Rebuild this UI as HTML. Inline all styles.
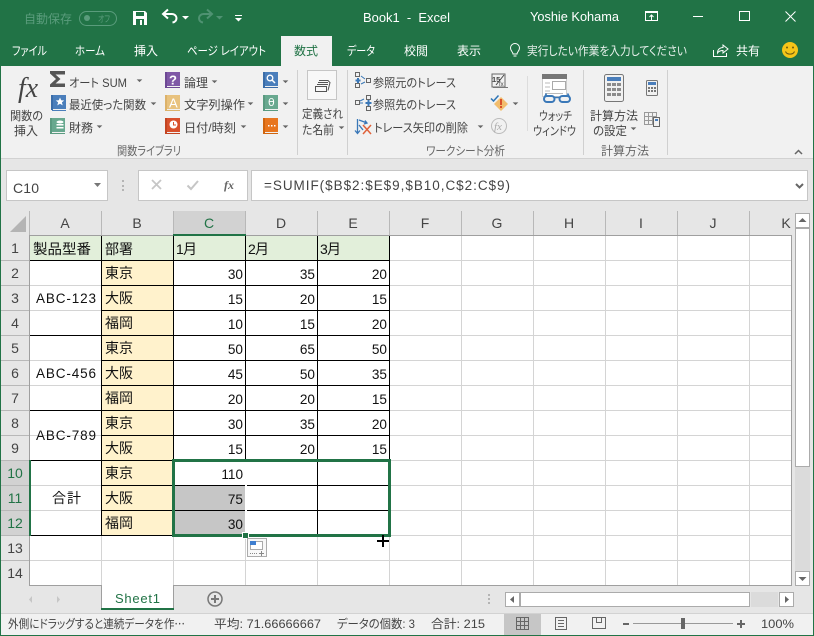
<!DOCTYPE html>
<html lang="ja"><head><meta charset="utf-8"><title>Book1 - Excel</title>
<style>
html,body{margin:0;padding:0;width:814px;height:636px;overflow:hidden;background:#e6e6e6}
svg{display:block}
text{font-family:"Liberation Sans","Noto Sans CJK JP",sans-serif;font-size:12px;fill:#444;white-space:pre}
.j{font-feature-settings:"palt"}
.w{fill:#fff}
.c{font-size:14px;fill:#111}
.n{font-size:13.6px;fill:#111;text-anchor:end}
.h{font-size:14px;fill:#444;text-anchor:middle}
.hs{font-size:14px;fill:#217346;text-anchor:middle}
.car{fill:#666;transform-box:fill-box;transform-origin:center;transform:scale(.8)}
</style></head><body>
<svg width="814" height="636" viewBox="0 0 814 636" xmlns="http://www.w3.org/2000/svg">
<!-- frame -->
<rect width="814" height="636" fill="#e6e6e6"/>
<rect width="814" height="66" fill="#217346"/>
<rect x="0" y="0" width="1" height="636" fill="#217346"/>
<rect x="813" y="0" width="1" height="636" fill="#217346"/>
<rect x="0" y="635" width="814" height="1" fill="#217346"/>
<!-- title bar -->
<text x="24" y="23" class="j" style="fill:#5a9c7c" textLength="48" lengthAdjust="spacingAndGlyphs">自動保存</text>
<rect x="79.500" y="11.500" width="37" height="14" rx="7" fill="none" stroke="#5a9c7c"/>
<circle cx="87" cy="18" r="3" fill="#5a9c7c"/>
<text x="98" y="22" class="j" style="font-size:9px;fill:#5a9c7c" textLength="12" lengthAdjust="spacingAndGlyphs">オフ</text>
<path d="M133 11h12l2 2v12h-14z" fill="#fff"/>
<rect x="136" y="12" width="8" height="4" fill="#217346"/>
<rect x="136" y="19" width="8" height="6" fill="#217346"/><rect x="140" y="20" width="2" height="5" fill="#fff"/>
<path d="M172.500 22.500c3-.5 4-2.500 4-4.500s-2-4-4.500-4H164" fill="none" stroke="#fff" stroke-width="2"/><path d="M168 9.500L163 14l5 4.500" fill="none" stroke="#fff" stroke-width="2"/>
<path d="M182 16h7l-3.500 3.500z" fill="#fff"/>
<path d="M203 22.500c-3-.5-4-2.500-4-4.500s2-4 4.500-4H211" fill="none" stroke="#4f9272" stroke-width="2"/><path d="M207 9.500l5 4.500-5 4.500" fill="none" stroke="#4f9272" stroke-width="2"/>
<path d="M216 16h7l-3.500 3.500z" fill="#4f9272"/>
<rect x="235" y="15" width="7" height="1" fill="#fff"/><path d="M235 18h7l-3.500 3.500z" fill="#fff"/>
<text x="363" y="22" class="w" style="font-size:12.500px" textLength="87" lengthAdjust="spacingAndGlyphs">Book1  -  Excel</text>
<text x="530" y="21" class="w" style="font-size:12.500px" textLength="89" lengthAdjust="spacingAndGlyphs">Yoshie Kohama</text>
<rect x="645.500" y="11.500" width="12" height="9" fill="none" stroke="#fff"/><rect x="645" y="11" width="13" height="2" fill="#fff"/><path d="M651.500 20v-5M649.500 17l2-2 2 2" fill="none" stroke="#fff"/>
<rect x="693" y="16" width="10" height="1" fill="#fff"/>
<rect x="739.500" y="11.500" width="10" height="9" fill="none" stroke="#fff"/>
<path d="M785.500 11.500l10 10M795.500 11.500l-10 10" fill="none" stroke="#fff"/>
<!-- tabs -->
<rect x="281" y="36" width="51" height="30" fill="#f1f1f1"/>
<text x="12" y="55" class="j w" textLength="35" lengthAdjust="spacingAndGlyphs">ファイル</text>
<text x="75" y="55" class="j w" textLength="30" lengthAdjust="spacingAndGlyphs">ホーム</text>
<text x="134" y="55" class="j w" textLength="24" lengthAdjust="spacingAndGlyphs">挿入</text>
<text x="187" y="55" class="j w" textLength="79" lengthAdjust="spacingAndGlyphs">ページ レイアウト</text>
<text x="294" y="55" class="j" style="fill:#217346" textLength="24" lengthAdjust="spacingAndGlyphs">数式</text>
<text x="347" y="55" class="j w" textLength="28" lengthAdjust="spacingAndGlyphs">データ</text>
<text x="404" y="55" class="j w" textLength="24" lengthAdjust="spacingAndGlyphs">校閲</text>
<text x="457" y="55" class="j w" textLength="24" lengthAdjust="spacingAndGlyphs">表示</text>
<path d="M513 54c0-2-2.500-3-2.500-6a4.500 4.500 0 0 1 9 0c0 3-2.500 4-2.500 6zM513.500 56h3" fill="none" stroke="#fff"/>
<text x="527" y="55" class="j" style="fill:#e8f0ec" textLength="160" lengthAdjust="spacingAndGlyphs">実行したい作業を入力してください</text>
<path d="M713.500 50v6.500h13V53" fill="none" stroke="#fff"/><path d="M717.500 53c0-4 3-5.500 5.500-5.500V45l5 4-5 4v-2.500c-2.500 0-4.500 1-5.500 2.500z" fill="none" stroke="#fff"/>
<text x="736" y="55" class="j w" textLength="24" lengthAdjust="spacingAndGlyphs">共有</text>
<circle cx="790" cy="50" r="8" fill="#f5c518"/><circle cx="787" cy="47.500" r="1" fill="#6b5a10"/><circle cx="793" cy="47.500" r="1" fill="#6b5a10"/><path d="M785.500 51.500c1.500 3.500 7.500 3.500 9 0" fill="none" stroke="#6b5a10"/>
<!-- ribbon -->
<rect x="1" y="66" width="812" height="92" fill="#f1f1f1"/>
<rect x="1" y="158" width="812" height="1" fill="#d2d2d2"/>
<rect x="297" y="70" width="1" height="85" fill="#d0d0d0"/>
<rect x="347" y="70" width="1" height="85" fill="#d0d0d0"/>
<rect x="527" y="76" width="1" height="55" fill="#dcdcdc"/>
<rect x="583" y="70" width="1" height="85" fill="#d0d0d0"/>
<rect x="667" y="70" width="1" height="85" fill="#d0d0d0"/>
<text x="18" y="97" style="font-family:'Liberation Serif',serif;font-style:italic;font-size:29px;fill:#444" textLength="20" lengthAdjust="spacingAndGlyphs">fx</text>
<text x="10" y="120" class="j" textLength="33" lengthAdjust="spacingAndGlyphs">関数の</text>
<text x="14" y="135" class="j" textLength="24" lengthAdjust="spacingAndGlyphs">挿入</text>
<path d="M50 71h15v3.500h-9.500l5 4.500-5 4.500H65V87H50v-2.500l6-5.500-6-5.500z" fill="#555"/>
<text x="69" y="87" class="j" textLength="58" lengthAdjust="spacingAndGlyphs">オート SUM</text>
<path class="car" d="M136 79h7l-3.500 3.500z"/>
<!-- book icons -->
<g><path d="M52 95h14v14H53v1h13v1H52z" fill="#4a7ebb"/><rect x="51" y="95" width="2" height="15" fill="#3a6ca8"/><path d="M60 97.500l1.200 2.800 3 .2-2.300 1.900.8 3-2.700-1.600-2.700 1.600.8-3-2.300-1.900 3-.2z" fill="#fff"/></g>
<text x="69" y="109" class="j" textLength="77" lengthAdjust="spacingAndGlyphs">最近使った関数</text>
<path class="car" d="M150 102h7l-3.500 3.500z"/>
<g><rect x="50" y="118" width="15" height="14" fill="#68a88f"/><rect x="50" y="118" width="2" height="16" fill="#5a9a80"/><rect x="51" y="133" width="14" height="1" fill="#5a9a80"/><ellipse cx="60" cy="122" rx="3.500" ry="1.500" fill="#fff"/><rect x="56.500" y="124" width="7" height="1.500" fill="#fff"/><rect x="56.500" y="127" width="7" height="1.500" fill="#fff"/></g>
<text x="69" y="132" class="j" textLength="24" lengthAdjust="spacingAndGlyphs">財務</text>
<path class="car" d="M96 125h7l-3.500 3.500z"/>
<g><rect x="165" y="72" width="15" height="14" fill="#7f58a6"/><rect x="165" y="72" width="2" height="16" fill="#6d4894"/><rect x="166" y="87" width="14" height="1" fill="#6d4894"/><text x="169" y="84.500" style="font-size:13px;font-weight:bold;fill:#fff">?</text></g>
<text x="184" y="87" class="j" textLength="24" lengthAdjust="spacingAndGlyphs">論理</text>
<path class="car" d="M211 80h7l-3.500 3.500z"/>
<g><rect x="165" y="95" width="15" height="14" fill="#e8c27e"/><rect x="165" y="95" width="2" height="16" fill="#dcb26a"/><rect x="166" y="110" width="14" height="1" fill="#dcb26a"/><text x="169" y="107.500" style="font-size:13px;fill:#fff">A</text></g>
<text x="184" y="109" class="j" textLength="61" lengthAdjust="spacingAndGlyphs">文字列操作</text>
<path class="car" d="M247 102h7l-3.500 3.500z"/>
<g><rect x="165" y="118" width="15" height="14" fill="#d8502c"/><rect x="165" y="118" width="2" height="16" fill="#c24422"/><rect x="166" y="133" width="14" height="1" fill="#c24422"/><circle cx="173.500" cy="124.500" r="4" fill="#fff"/><path d="M173.500 122v3h2.500" fill="none" stroke="#d8502c"/></g>
<text x="184" y="132" class="j" textLength="52" lengthAdjust="spacingAndGlyphs">日付/時刻</text>
<path class="car" d="M240 125h7l-3.500 3.500z"/>
<g><rect x="263" y="72" width="15" height="14" fill="#4a7ebb"/><rect x="263" y="72" width="2" height="16" fill="#3a6ca8"/><rect x="264" y="87" width="14" height="1" fill="#3a6ca8"/><circle cx="270" cy="78" r="2.800" fill="none" stroke="#fff" stroke-width="1.300"/><path d="M272 80l3 3" stroke="#fff" stroke-width="1.500"/></g>
<path class="car" d="M282 80h7l-3.500 3.500z"/>
<g><rect x="263" y="95" width="15" height="14" fill="#68a88f"/><rect x="263" y="95" width="2" height="16" fill="#5a9a80"/><rect x="264" y="110" width="14" height="1" fill="#5a9a80"/><text x="268" y="106" style="font-size:11px;fill:#fff;font-family:'DejaVu Sans',sans-serif">θ</text></g>
<path class="car" d="M282 102h7l-3.500 3.500z"/>
<g><rect x="263" y="118" width="15" height="14" fill="#e8761f"/><rect x="263" y="118" width="2" height="16" fill="#d0650f"/><rect x="264" y="133" width="14" height="1" fill="#d0650f"/><rect x="268" y="125" width="1.500" height="1.500" fill="#fff"/><rect x="271" y="125" width="1.500" height="1.500" fill="#fff"/><rect x="274" y="125" width="1.500" height="1.500" fill="#fff"/></g>
<path class="car" d="M282 125h7l-3.500 3.500z"/>
<!-- name manager -->
<rect x="307.500" y="70.500" width="29" height="29" fill="#f8f8f8" stroke="#c6c6c6"/>
<path d="M315.500 91.500h11v-5h-11zM317 84.500h11M318 82.500h10M319 80.500h9l2 2-2 8" fill="none" stroke="#555"/>
<text x="302" y="118" class="j" textLength="41" lengthAdjust="spacingAndGlyphs">定義され</text>
<text x="302" y="134" class="j" textLength="32" lengthAdjust="spacingAndGlyphs">た名前</text>
<path class="car" d="M338 126h7l-3.500 3.500z"/>
<!-- trace -->
<g fill="none" stroke="#666"><rect x="355.500" y="72.500" width="4" height="4"/><rect x="355.500" y="83.500" width="4" height="4"/><rect x="366.500" y="78.500" width="4" height="4"/></g>
<path d="M358 78v5M355.500 80.500h5" stroke="#3a78b8" stroke-width="2"/><path d="M361 76l4 3M361 84l4-2" stroke="#3a78b8"/>
<text x="373" y="87" class="j" textLength="83" lengthAdjust="spacingAndGlyphs">参照元のトレース</text>
<g fill="none" stroke="#666"><rect x="355.500" y="100.500" width="4" height="4"/><rect x="366.500" y="95.500" width="4" height="4"/><rect x="366.500" y="106.500" width="4" height="4"/></g>
<path d="M368.500 100v6M365.500 103h6" stroke="#3a78b8" stroke-width="2"/><path d="M360 101l4-2M360 103l3 0" stroke="#3a78b8"/>
<text x="373" y="109" class="j" textLength="83" lengthAdjust="spacingAndGlyphs">参照先のトレース</text>
<path d="M357.500 119v14M355 130.500l2.500 3 2.500-3M359 120l8 3M359 125l4 5M365 120.500l2 2.500-3 1" fill="none" stroke="#3a78b8" stroke-width="1.300"/>
<path d="M363 125l8 9M371 125l-8 9" stroke="#e0623a" stroke-width="1.500"/>
<text x="374" y="132" class="j" textLength="94" lengthAdjust="spacingAndGlyphs">トレース矢印の削除</text>
<path class="car" d="M477 125h7l-3.500 3.500z"/>
<!-- audit small -->
<rect x="492" y="74" width="13" height="13" fill="none" stroke="#666"/>
<text x="492" y="82" style="font-size:7.500px;font-weight:bold;fill:#444">15</text>
<path d="M504 75l-8 10" stroke="#444"/><text x="499" y="86" style="font-size:6px;fill:#444">fx</text><rect x="493" y="87" width="15" height="1" fill="#777"/>
<path d="M491 98.500l2.500 2.500 5-5.500" fill="none" stroke="#2e75b6" stroke-width="1.500"/>
<path d="M501 97l7 7-7 7-7-7z" fill="#f2bd6d"/><rect x="500" y="99" width="2" height="6" fill="#d9502a"/><rect x="500" y="106" width="2" height="2" fill="#d9502a"/>
<path class="car" d="M512 102h7l-3.500 3.500z"/>
<circle cx="499" cy="126" r="7.500" fill="none" stroke="#bbb"/>
<text x="494" y="130" style="font-family:'Liberation Serif',serif;font-style:italic;font-size:11px;fill:#aaa">fx</text>
<!-- watch -->
<rect x="542.500" y="74.500" width="24" height="22" fill="#fff" stroke="#ccc"/><rect x="542" y="74" width="25" height="5" fill="#777"/>
<rect x="552.500" y="81.500" width="13" height="8" fill="none" stroke="#aaa"/><path d="M545 83h5M545 87h5M545 91h5M545 93.500h18" stroke="#bbb"/>
<rect x="544" y="96" width="10.500" height="6" rx="3" fill="#f1f1f1" stroke="#3a78b8" stroke-width="2"/><rect x="559.500" y="96" width="10.500" height="6" rx="3" fill="#f1f1f1" stroke="#3a78b8" stroke-width="2"/><path d="M554.500 97.500h5M544 98l2.500-4.500M570 98l-2.500-4.500" fill="none" stroke="#3a78b8" stroke-width="1.600"/>
<text x="539" y="120" class="j" textLength="33" lengthAdjust="spacingAndGlyphs">ウォッチ</text>
<text x="533" y="135" class="j" textLength="43" lengthAdjust="spacingAndGlyphs">ウィンドウ</text>
<!-- calc -->
<rect x="604.500" y="74.500" width="19" height="27" rx="2" fill="#f1f1f1" stroke="#777"/>
<rect x="607" y="77" width="14" height="4" fill="#4a7ebb"/>
<g fill="#8c8c8c"><rect x="607" y="83" width="4" height="3"/><rect x="612" y="83" width="4" height="3"/><rect x="617" y="83" width="4" height="3"/><rect x="607" y="88" width="4" height="3"/><rect x="612" y="88" width="4" height="3"/><rect x="617" y="88" width="4" height="3"/><rect x="607" y="93" width="4" height="3"/><rect x="612" y="93" width="4" height="3"/><rect x="617" y="93" width="4" height="3"/></g>
<text x="590" y="120" class="j" textLength="48" lengthAdjust="spacingAndGlyphs">計算方法</text>
<text x="593" y="135" class="j" textLength="34" lengthAdjust="spacingAndGlyphs">の設定</text>
<path class="car" d="M630 127h7l-3.500 3.500z"/>
<rect x="646.500" y="80.500" width="11" height="15" rx="1" fill="#f1f1f1" stroke="#777"/><rect x="648" y="82" width="8" height="3" fill="#4a7ebb"/><g fill="#777"><rect x="648" y="87" width="2" height="2"/><rect x="651" y="87" width="2" height="2"/><rect x="654" y="87" width="2" height="2"/><rect x="648" y="90" width="2" height="2"/><rect x="651" y="90" width="2" height="2"/><rect x="654" y="90" width="2" height="2"/></g>
<path d="M644.500 112.500h12v12h-12zM644.500 116.500h12M644.500 120.500h8M648.500 112.500v12M652.500 112.500v12" fill="none" stroke="#999"/>
<rect x="653.500" y="117.500" width="6" height="9" fill="#f1f1f1" stroke="#666"/><rect x="655" y="119" width="3" height="2" fill="#4a7ebb"/>
<text x="117" y="155" class="j" style="fill:#666" textLength="64" lengthAdjust="spacingAndGlyphs">関数ライブラリ</text>
<text x="426" y="155" class="j" style="fill:#666" textLength="79" lengthAdjust="spacingAndGlyphs">ワークシート分析</text>
<text x="601" y="155" class="j" style="fill:#666" textLength="48" lengthAdjust="spacingAndGlyphs">計算方法</text>
<path d="M795 154l3.500-3.500 3.500 3.500" fill="none" stroke="#666" stroke-width="1.500"/>
<!-- formula bar -->
<rect x="6.500" y="170.500" width="101" height="30" fill="#fff" stroke="#c6c6c6"/>
<text x="13" y="193" style="font-size:14px" textLength="26" lengthAdjust="spacing">C10</text>
<path d="M94 183h7l-3.500 4z" fill="#777"/>
<g fill="#b4b4b4"><rect x="122" y="180" width="2" height="2"/><rect x="122" y="185" width="2" height="2"/><rect x="122" y="189" width="2" height="2"/></g>
<rect x="138.500" y="170.500" width="109" height="30" fill="#fff" stroke="#c6c6c6"/>
<path d="M152 180l9 9M161 180l-9 9" stroke="#c6c6c6" stroke-width="1.800"/>
<path d="M187.500 185.500l3.500 3.500 7-8" fill="none" stroke="#c6c6c6" stroke-width="2"/>
<text x="224" y="189" style="font-family:'Liberation Serif',serif;font-style:italic;font-weight:bold;font-size:12px;fill:#666">fx</text>
<rect x="251.500" y="170.500" width="556" height="30" fill="#fff" stroke="#c6c6c6"/>
<text x="264" y="190" style="font-size:13.500px" textLength="246" lengthAdjust="spacing">=SUMIF($B$2:$E$9,$B10,C$2:C$9)</text>
<path d="M796 184l3.500 3.500 3.500-3.500" fill="none" stroke="#666" stroke-width="2"/>
<!-- grid base -->
<rect x="30" y="236" width="761" height="349" fill="#fff"/>
<g stroke="#d4d4d4" fill="none" shape-rendering="crispEdges">
<path d="M30 260.500H791M30 285.500H791M30 310.500H791M30 335.500H791M30 360.500H791M30 385.500H791M30 410.500H791M30 435.500H791M30 460.500H791M30 485.500H791M30 510.500H791M30 535.500H791M30 560.500H791"/>
<path d="M101.500 236V585M173.500 236V585M245.500 236V585M317.500 236V585M389.500 236V585M461.500 236V585M533.500 236V585M605.500 236V585M677.500 236V585M749.500 236V585"/>
</g>
<rect x="30" y="236" width="359" height="24" fill="#e2efda"/>
<rect x="102" y="261" width="71" height="274" fill="#fff2cc"/>
<!-- headers -->
<rect x="174" y="211" width="71" height="23" fill="#d2d2d2"/>
<rect x="1" y="461" width="28" height="74" fill="#d2d2d2"/>
<path d="M26 216v16H10z" fill="#b4b4b4"/>
<g stroke="#b8b8b8" shape-rendering="crispEdges"><path d="M29.500 211V235M101.500 211V235M173.500 211V235M245.500 211V235M317.500 211V235M389.500 211V235M461.500 211V235M533.500 211V235M605.500 211V235M677.500 211V235M749.500 211V235"/>
<path d="M1 260.500H29M1 285.500H29M1 310.500H29M1 335.500H29M1 360.500H29M1 385.500H29M1 410.500H29M1 435.500H29M1 460.500H29M1 485.500H29M1 510.500H29M1 535.500H29M1 560.500H29"/></g>
<rect x="29" y="235" width="762" height="1" fill="#9f9f9f"/>
<rect x="29" y="235" width="1" height="350" fill="#9f9f9f"/>
<rect x="791" y="235" width="1" height="351" fill="#9f9f9f"/>
<rect x="29" y="585" width="763" height="1" fill="#9f9f9f"/>
<rect x="173" y="234" width="73" height="2" fill="#217346"/>
<g>
<text x="65" y="228" class="h">A</text><text x="137" y="228" class="h">B</text><text x="209" y="228" class="hs">C</text><text x="281" y="228" class="h">D</text><text x="353" y="228" class="h">E</text><text x="425" y="228" class="h">F</text><text x="497" y="228" class="h">G</text><text x="569" y="228" class="h">H</text><text x="641" y="228" class="h">I</text><text x="713" y="228" class="h">J</text><text x="786" y="228" class="h">K</text>
</g>
<g>
<text x="15" y="253" class="h">1</text><text x="15" y="278" class="h">2</text><text x="15" y="303" class="h">3</text><text x="15" y="328" class="h">4</text><text x="15" y="353" class="h">5</text><text x="15" y="378" class="h">6</text><text x="15" y="403" class="h">7</text><text x="15" y="428" class="h">8</text><text x="15" y="453" class="h">9</text><text x="15" y="478" class="hs">10</text><text x="15" y="503" class="hs">11</text><text x="15" y="528" class="hs">12</text><text x="15" y="553" class="h">13</text><text x="15" y="578" class="h">14</text>
</g>
<!-- selection fill -->
<rect x="175" y="486" width="70" height="49" fill="#c6c6c6"/>
<!-- black borders -->
<g stroke="#000" fill="none" shape-rendering="crispEdges">
<path d="M30 260.500H389M101 285.500H389M101 310.500H389M30 335.500H389M101 360.500H389M101 385.500H389M30 410.500H389M101 435.500H389M30 460.500H389M101 485.500H389M101 510.500H389M30 535.500H389"/>
<path d="M101.500 236V536M173.500 236V536M245.500 236V536M317.500 236V536M389.500 236V536"/>
</g>
<rect x="29" y="460" width="2" height="76" fill="#217346"/>
<!-- cell text -->
<g>
<text x="33" y="254" class="c" textLength="58" lengthAdjust="spacingAndGlyphs">製品型番</text>
<text x="105" y="254" class="c" textLength="28">部署</text>
<text x="176" y="254" class="c" textLength="21">1月</text>
<text x="248" y="254" class="c" textLength="21">2月</text>
<text x="320" y="254" class="c" textLength="21">3月</text>
<text x="36" y="303" class="c" style="font-size:13.500px" textLength="60" lengthAdjust="spacing">ABC-123</text>
<text x="36" y="378" class="c" style="font-size:13.500px" textLength="60" lengthAdjust="spacing">ABC-456</text>
<text x="36" y="440" class="c" style="font-size:13.500px" textLength="60" lengthAdjust="spacing">ABC-789</text>
<text x="52" y="503" class="c" textLength="29">合計</text>
<text x="105" y="278" class="c" textLength="28">東京</text><text x="105" y="303" class="c" textLength="28">大阪</text><text x="105" y="328" class="c" textLength="28">福岡</text>
<text x="105" y="353" class="c" textLength="28">東京</text><text x="105" y="378" class="c" textLength="28">大阪</text><text x="105" y="403" class="c" textLength="28">福岡</text>
<text x="105" y="428" class="c" textLength="28">東京</text><text x="105" y="453" class="c" textLength="28">大阪</text>
<text x="105" y="478" class="c" textLength="28">東京</text><text x="105" y="503" class="c" textLength="28">大阪</text><text x="105" y="528" class="c" textLength="28">福岡</text>
<text x="243" y="279" class="n">30</text><text x="315" y="279" class="n">35</text><text x="387" y="279" class="n">20</text>
<text x="243" y="304" class="n">15</text><text x="315" y="304" class="n">20</text><text x="387" y="304" class="n">15</text>
<text x="243" y="329" class="n">10</text><text x="315" y="329" class="n">15</text><text x="387" y="329" class="n">20</text>
<text x="243" y="354" class="n">50</text><text x="315" y="354" class="n">65</text><text x="387" y="354" class="n">50</text>
<text x="243" y="379" class="n">45</text><text x="315" y="379" class="n">50</text><text x="387" y="379" class="n">35</text>
<text x="243" y="404" class="n">20</text><text x="315" y="404" class="n">20</text><text x="387" y="404" class="n">15</text>
<text x="243" y="429" class="n">30</text><text x="315" y="429" class="n">35</text><text x="387" y="429" class="n">20</text>
<text x="243" y="454" class="n">15</text><text x="315" y="454" class="n">20</text><text x="387" y="454" class="n">15</text>
<text x="243" y="479" class="n">110</text><text x="243" y="504" class="n">75</text><text x="243" y="529" class="n">30</text>
</g>
<!-- selection outline -->
<rect x="245" y="462" width="2" height="72" fill="#fff"/>
<rect x="173.500" y="460.500" width="216" height="75" fill="none" stroke="#217346" stroke-width="3"/>
<rect x="242" y="532" width="7" height="7" fill="#fff"/><rect x="243" y="533" width="5" height="5" fill="#217346"/>
<!-- paste options -->
<rect x="247.500" y="538.500" width="19" height="18" fill="#f8f8f8" stroke="#ababab"/>
<rect x="250.500" y="541.500" width="12" height="8" fill="#fff" stroke="#aaa"/><rect x="250" y="541" width="6" height="4" fill="#3f7fd0"/>
<path d="M250 553.500h7" stroke="#888" stroke-dasharray="1 1" fill="none"/>
<path d="M261.500 551v5M259 553.500h5" stroke="#888" fill="none"/>
<!-- cursor -->
<path d="M383 535v12M377 541h12" stroke="#000" stroke-width="2"/>
<!-- sheet tabs -->
<rect x="1" y="586" width="812" height="27" fill="#e6e6e6"/>
<rect x="101" y="585" width="73" height="24" fill="#fff"/>
<rect x="101" y="585" width="1" height="24" fill="#9f9f9f"/><rect x="173" y="585" width="1" height="24" fill="#9f9f9f"/>
<rect x="101" y="608" width="73" height="2" fill="#217346"/>
<text x="115" y="603" style="font-size:13px;fill:#217346" textLength="45" lengthAdjust="spacing">Sheet1</text>
<path d="M32 596v7l-3-3.500zM57 596v7l3-3.500z" fill="#c6c6c6"/>
<circle cx="215" cy="599" r="7" fill="none" stroke="#777" stroke-width="1.500"/><path d="M215 595v8M211 599h8" stroke="#777" stroke-width="2"/>
<g fill="#b4b4b4"><rect x="488" y="594" width="2" height="2"/><rect x="488" y="598" width="2" height="2"/><rect x="488" y="602" width="2" height="2"/></g>
<rect x="505.500" y="592.500" width="14" height="14" fill="#fff" stroke="#ababab"/><path d="M514 596v7l-4-3.500z" fill="#666"/>
<rect x="520.500" y="592.500" width="229" height="14" fill="#fff" stroke="#ababab"/>
<rect x="751" y="592" width="27" height="15" fill="#dbdbdb"/>
<rect x="779.500" y="592.500" width="14" height="14" fill="#fff" stroke="#ababab"/><path d="M785 596v7l4-3.500z" fill="#666"/>
<!-- vertical scrollbar -->
<rect x="795" y="213" width="15" height="373" fill="#dbdbdb"/>
<rect x="795.500" y="213.500" width="14" height="14" fill="#fff" stroke="#ababab"/><path d="M798.500 222h8l-4-4z" fill="#666"/>
<rect x="795.500" y="228.500" width="14" height="238" fill="#fff" stroke="#ababab"/>
<rect x="795.500" y="571.500" width="14" height="14" fill="#fff" stroke="#ababab"/><path d="M798.500 577h8l-4 4z" fill="#666"/>
<!-- status bar -->
<rect x="1" y="613" width="812" height="22" fill="#f1f1f1"/>
<rect x="1" y="613" width="812" height="1" fill="#d2d2d2"/>
<text x="8" y="628" class="j" textLength="177" lengthAdjust="spacingAndGlyphs">外側にドラッグすると連続データを作⋯</text>
<text x="214" y="628" class="j" textLength="107" lengthAdjust="spacingAndGlyphs">平均: 71.66666667</text>
<text x="337" y="628" class="j" textLength="78" lengthAdjust="spacingAndGlyphs">データの個数: 3</text>
<text x="431" y="628" class="j" textLength="54" lengthAdjust="spacingAndGlyphs">合計: 215</text>
<rect x="504" y="614" width="37" height="21" fill="#c6c6c6"/>
<path d="M516.500 617.500h12v12h-12zM516.500 621.500h12M516.500 625.500h12M520.500 617.500v12M524.500 617.500v12" fill="none" stroke="#666"/>
<path d="M555.500 617.500h11v12h-11zM558 620.500h6M558 623.500h6M558 626.500h6" fill="none" stroke="#666"/>
<path d="M592.500 617.500h13v11h-13zM596.500 617.500v5h5v-5" fill="none" stroke="#666"/>
<rect x="623" y="623" width="6" height="2" fill="#666"/>
<rect x="633" y="623" width="100" height="1" fill="#999"/>
<rect x="681" y="618" width="4" height="11" fill="#666"/>
<path d="M741 620v8M737 624h8" stroke="#666" stroke-width="2"/>
<text x="761" y="628" textLength="33" lengthAdjust="spacingAndGlyphs">100%</text>
</svg>
</body></html>
